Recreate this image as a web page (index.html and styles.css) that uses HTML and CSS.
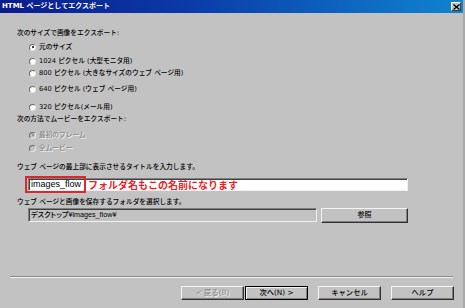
FILE: index.html
```html
<!DOCTYPE html>
<html lang="ja">
<head>
<meta charset="utf-8">
<title>HTML ページとしてエクスポート</title>
<link rel="stylesheet" href="styles.css">
</head>
<body>
<div class="window">
  <div class="titlebar">
    <span class="title">HTML ページとしてエクスポート</span>
    <span class="close"><svg width="7" height="6" viewBox="0 0 7 6"><path d="M0.5 0.5 L6.5 5.5 M6.5 0.5 L0.5 5.5" stroke="#000" stroke-width="1.3"/></svg></span>
  </div>
  <div class="content">
    <div class="label l1">次のサイズで画像をエクスポート:</div>
    <div class="opt r1"><span class="radio checked"></span>元のサイズ</div>
    <div class="opt r2"><span class="radio"></span>1024 ピクセル (大型モニタ用)</div>
    <div class="opt r3"><span class="radio"></span>800 ピクセル (大きなサイズのウェブ ページ用)</div>
    <div class="opt r4"><span class="radio"></span>640 ピクセル (ウェブ ページ用)</div>
    <div class="opt r5"><span class="radio"></span>320 ピクセル(メール用)</div>
    <div class="label l2">次の方法でムービーをエクスポート:</div>
    <div class="opt d1 disabled"><span class="radio checked"></span>最初のフレーム</div>
    <div class="opt d2 disabled"><span class="radio"></span>全ムービー</div>
    <div class="label l3">ウェブ ページの最上部に表示させるタイトルを入力します。</div>
    <div class="input">
      <span class="input-text">images_flow</span>
      <span class="note">フォルダ名もこの名前になります</span>
      <span class="highlight"></span>
    </div>
    <div class="label l4">ウェブ ページと画像を保存するフォルダを選択します。</div>
    <div class="path-row">
      <div class="path">デスクトップ¥images_flow¥</div>
      <div class="btn browse">参照</div>
    </div>
    <div class="separator"></div>
    <div class="buttons">
      <div class="btn wide disabled-btn">&lt; 戻る(B)</div>
      <div class="btn wide default">次へ(N) &gt;</div>
      <div class="btn wide">キャンセル</div>
      <div class="btn wide">ヘルプ</div>
    </div>
  </div>
</div>
</body>
</html>
```

FILE: styles.css
```css
html, body {
  margin: 0;
  padding: 0;
  background: #c2c2c2;
}
body {
  font-family: "DejaVu Sans", "Noto Sans CJK JP", sans-serif;
  color: #000;
}
.window {
  width: 465px;
  height: 308px;
  box-sizing: border-box;
  border-right: 2px solid #a9a9a9;
  background: #c2c2c2;
  overflow: hidden;
}
.titlebar {
  height: 13px;
  display: flex;
  align-items: center;
  padding-left: 2px;
  background: linear-gradient(to right, #0a1c8c 0%, #0a3aa8 40%, #1084d0 100%);
}
.title {
  color: #fff;
  font-weight: bold;
  font-size: 7px;
  line-height: 13px;
  white-space: nowrap;
}
.close {
  margin-left: auto;
  margin-right: 2px;
  width: 10px;
  height: 9px;
  box-sizing: border-box;
  background: #c2c2c2;
  border: 1px solid;
  border-color: #fff #404040 #404040 #fff;
  display: flex;
  align-items: center;
  justify-content: center;
}
.content {
  padding: 15px 9px 0 17px;
  display: flex;
  flex-direction: column;
}
.label, .opt {
  font-size: 6.7px;
  font-weight: 500;
  line-height: 10px;
  height: 10px;
  white-space: nowrap;
}
.opt {
  display: flex;
  align-items: center;
  margin-left: 12px;
}
.radio {
  width: 7px;
  height: 7px;
  box-sizing: border-box;
  border-radius: 50%;
  background: #fff;
  border: 1px solid;
  border-color: #6a6a6a #e6e6e6 #e6e6e6 #6a6a6a;
  margin-right: 3px;
  position: relative;
  flex: none;
}
.radio.checked::after {
  content: "";
  position: absolute;
  left: 1.5px;
  top: 1.5px;
  width: 2px;
  height: 2px;
  border-radius: 50%;
  background: #000;
}
.disabled {
  color: #8a8a8a;
  text-shadow: 1px 1px 0 #f4f4f4;
}
.disabled .radio {
  background: #c2c2c2;
}
.disabled .radio.checked::after {
  background: #808080;
}
.l1 { margin-top: 0; }
.r1 { margin-top: 4px; }
.r2 { margin-top: 4px; }
.r3 { margin-top: 2px; }
.r4 { margin-top: 6px; }
.r5 { margin-top: 8px; }
.l2 { margin-top: 2px; }
.d1 { margin-top: 6px; }
.d2 { margin-top: 3px; }
.l3 { margin-top: 9px; }
.l4 { margin-top: 6px; }

.input {
  position: relative;
  margin-top: 6px;
  margin-left: 11px;
  width: 380px;
  height: 13px;
  box-sizing: border-box;
  background: #fff;
  border: 1px solid;
  border-color: #808080 #f0f0f0 #f0f0f0 #808080;
  box-shadow: inset 1px 1px 0 #404040;
  display: flex;
  align-items: center;
  padding-left: 2px;
}
.input-text {
  font-family: "Liberation Sans", sans-serif;
  font-size: 9px;
  line-height: 11px;
}
.note {
  margin-left: 7px;
  color: #ee1c24;
  font-family: "Noto Sans CJK JP", sans-serif;
  font-weight: bold;
  font-size: 10px;
  line-height: 11px;
  white-space: nowrap;
}
.highlight {
  position: absolute;
  left: -4px;
  top: -3px;
  width: 61px;
  height: 17px;
  box-sizing: border-box;
  border: 2px solid #e0262c;
}
.path-row {
  margin-top: 1px;
  margin-left: 11px;
  display: flex;
  align-items: flex-start;
  gap: 4px;
}
.path {
  width: 289px;
  height: 14px;
  box-sizing: border-box;
  border: 1px solid;
  border-color: #808080 #f0f0f0 #f0f0f0 #808080;
  box-shadow: inset 1px 1px 0 #404040;
  font-family: "Liberation Sans", "Noto Sans CJK JP", sans-serif;
  font-feature-settings: "palt";
  font-weight: 500;
  font-size: 7.2px;
  line-height: 12px;
  padding-left: 2px;
  white-space: nowrap;
}
.btn {
  height: 15px;
  box-sizing: border-box;
  background: #c2c2c2;
  border: 1px solid;
  border-color: #f4f4f4 #303030 #303030 #f4f4f4;
  box-shadow: inset -1px -1px 0 #808080;
  font-size: 7px;
  font-weight: 500;
  line-height: 13px;
  text-align: center;
  white-space: nowrap;
}
.browse {
  width: 87px;
}
.separator {
  margin-top: 53px;
  margin-left: -7px;
  width: 443px;
  height: 2px;
  box-sizing: border-box;
  border-top: 1px solid #8a8a8a;
  border-bottom: 1px solid #f4f4f4;
}
.buttons {
  margin-top: 8px;
  display: flex;
  justify-content: flex-end;
  gap: 10px;
}
.btn.wide {
  width: 63px;
  height: 14px;
  line-height: 12px;
  font-size: 7.3px;
}
.btn.disabled-btn {
  margin-right: -9px;
  color: #8a8a8a;
  text-shadow: 1px 1px 0 #f4f4f4;
}
.btn.default {
  border: 1px solid #000;
  box-shadow: inset 1px 1px 0 #f4f4f4, inset -1px -1px 0 #808080;
}
```
